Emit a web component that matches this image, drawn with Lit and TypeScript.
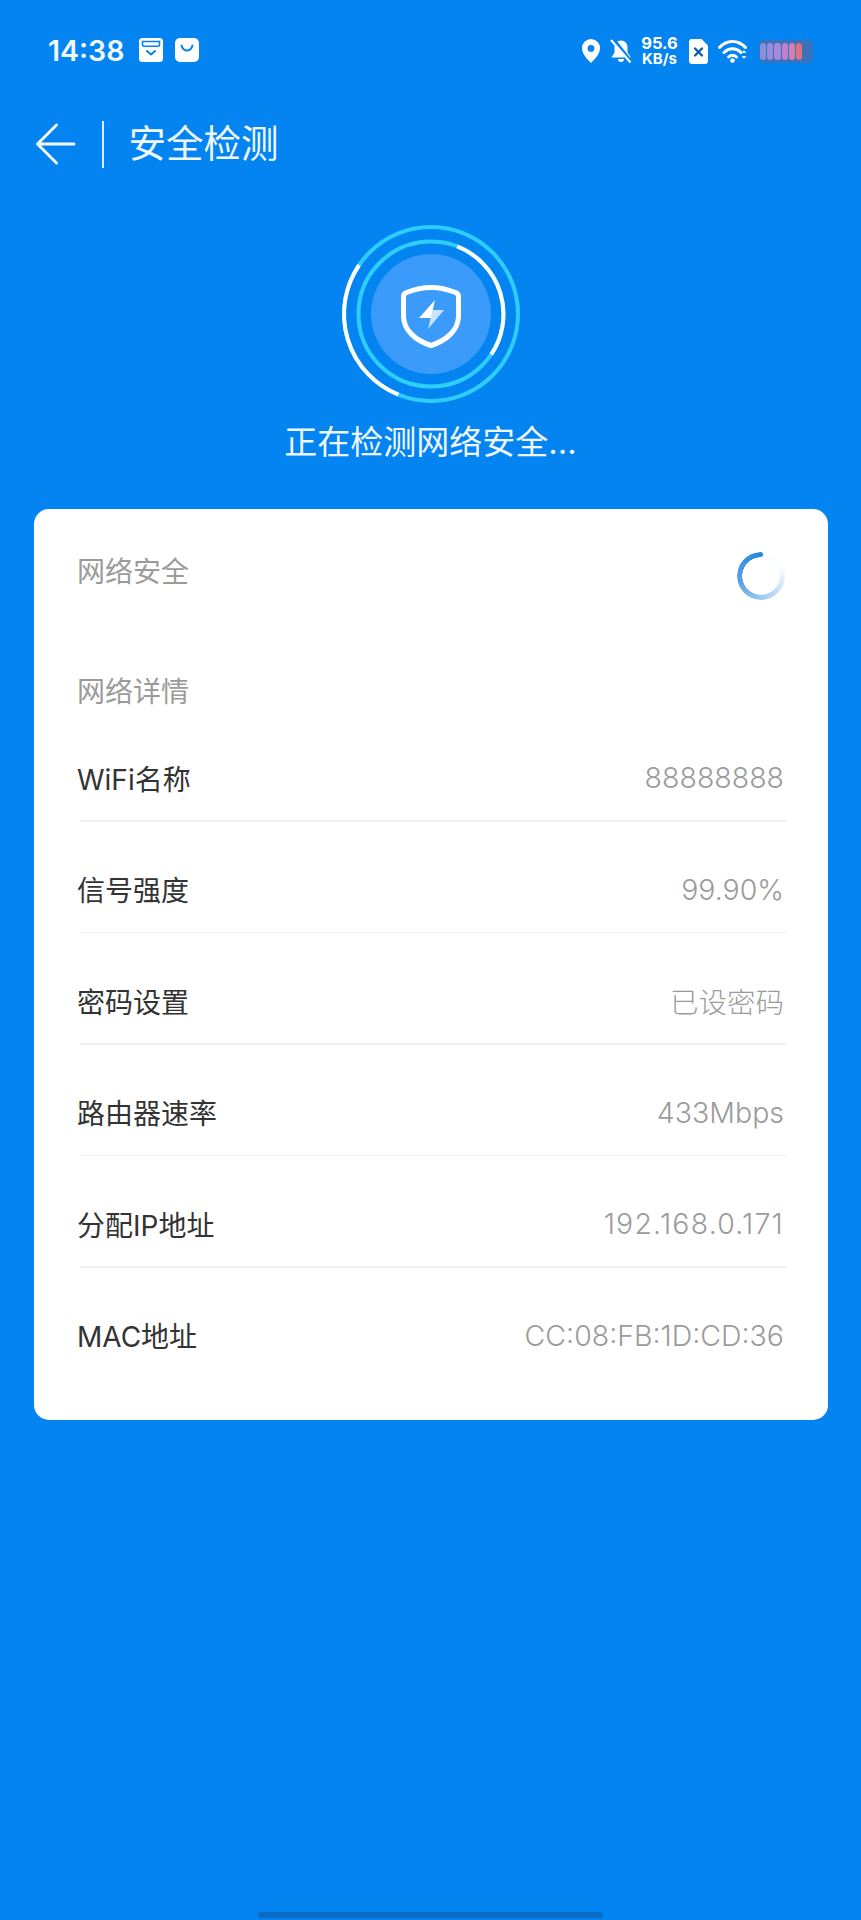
import { LitElement, html, css, svg } from "lit";
import { customElement } from "lit/decorators.js";

const rows: [string, string, number][] = [
  ["WiFi名称", "88888888", 0],
  ["信号强度", "99.90%", 0],
  ["密码设置", "已设密码", 0],
  ["路由器速率", "433Mbps", 0],
  ["分配IP地址", "192.168.0.171", 1.2],
  ["MAC地址", "CC:08:FB:1D:CD:36", 0],
];
const cells = ["#8a90dc", "#978cdc", "#a888da", "#bc83cc", "#d37fb0", "#e0717e"];

@customElement("app-root")
export class AppRoot extends LitElement {
  static styles = css`
    :host {
      display: flex;
      flex-direction: column;
      width: 861px;
      height: 1920px;
      background: #0384f1;
      font-family: "Inter", "Noto Sans CJK SC", sans-serif;
      overflow: hidden;
    }
    .status {
      height: 102px;
      flex: none;
      display: flex;
      align-items: flex-start;
      padding: 38px 48px 0 48px;
      box-sizing: border-box;
      color: #fff;
    }
    .time {
      font-size: 28.5px;
      font-weight: 600;
      line-height: 26px;
      width: 79px;
      flex: none;
      color: #f2f9ff;
    }
    .ic {
      display: block;
      flex: none;
    }
    .gap12 {
      margin-left: 12px;
    }
    .right {
      margin-left: auto;
      display: flex;
      align-items: center;
      height: 26px;
    }
    .bell {
      margin-left: 10px;
    }
    .wifi {
      margin-left: 10px;
    }
    .speed {
      width: 39px;
      margin: 0 10px 0 8px;
      text-align: center;
      font-size: 16.5px;
      line-height: 15px;
      font-weight: 700;
      white-space: nowrap;
    }
    .speed div:last-child {
      font-size: 15px;
    }
    .battery {
      margin-left: 12px;
      width: 54px;
      height: 23px;
      box-sizing: border-box;
      border-radius: 5px;
      background: #3a72bc;
      display: flex;
      gap: 1px;
      padding: 3px 11px 3px 1px;
      filter: blur(0.6px);
    }
    .cell {
      flex: 1;
      border-radius: 3px;
    }
    .nav {
      height: 48px;
      margin-top: 18px;
      flex: none;
      display: flex;
      align-items: center;
      padding-left: 35px;
      color: #f0f8ff;
    }
    .vline {
      width: 2px;
      height: 47px;
      background: #d8ecfd;
      margin: 0 24.5px 0 26px;
    }
    .title {
      font-size: 37.5px;
      font-weight: 400;
      line-height: 48px;
    }
    .hero {
      flex: none;
      margin-top: 51px;
      display: flex;
      flex-direction: column;
      align-items: center;
    }
    .detecting {
      margin-top: 11px;
      font-size: 33px;
      line-height: 44px;
      color: #eef7ff;
      font-weight: 400;
    }
    .card {
      margin: 45px 33.5px 0;
      height: 911px;
      box-sizing: border-box;
      flex: none;
      background: #fff;
      border-radius: 15px;
      padding: 42px 43.5px 0;
    }
    .sec {
      font-size: 28px;
      line-height: 42px;
      color: #9b9b9b;
      font-weight: 400;
    }
    .sec-top {
      display: flex;
      justify-content: space-between;
      align-items: flex-start;
      height: 120px;
    }
    .spin {
      position: relative;
      width: 48px;
      height: 48px;
      margin-top: 1px;
      margin-right: -1px;
    }
    .spin::after {
      content: "";
      position: absolute;
      left: 21px;
      top: 0;
      width: 5px;
      height: 5px;
      border-radius: 50%;
      background: #2a88de;
    }
    .spinner {
      width: 48px;
      height: 48px;
      border-radius: 50%;
      background: conic-gradient(
        from 0deg,
        rgba(42, 136, 222, 0) 0deg,
        rgba(42, 136, 222, 0.03) 70deg,
        rgba(42, 136, 222, 0.45) 180deg,
        rgba(42, 136, 222, 0.8) 260deg,
        #2a88de 360deg
      );
      -webkit-mask: radial-gradient(circle, transparent 18.5px, #000 19px);
      mask: radial-gradient(circle, transparent 18.5px, #000 19px);
    }
    .rows {
      display: flex;
      flex-direction: column;
    }
    .row {
      height: 111.5px;
      box-sizing: border-box;
      display: flex;
      flex-direction: column;
      justify-content: flex-end;
    }
    .row-first {
      height: 108.5px;
    }
    .line {
      display: flex;
      justify-content: space-between;
      align-items: center;
      height: 36px;
      margin-bottom: 24.5px;
      font-size: 28px;
    }
    .label {
      color: #333;
      font-weight: 400;
    }
    .value {
      color: #9b9b9b;
      font-weight: 300;
      font-size: 28.5px;
    }
    .divider {
      height: 1.5px;
      background: #f1f1f1;
      margin: 0 -3px 0 3px;
    }
    .spacer {
      height: 1.5px;
    }
    .home {
      margin: auto auto 2px;
      width: 345px;
      height: 6px;
      border-radius: 3px;
      background: #0a6cc4;
      flex: none;
    }
  `;

  private boxIcon() {
    return html`<svg class="ic gap12" width="24" height="24" viewBox="0 0 24 24">
      <rect width="24" height="24" rx="3.500" fill="#fff" />
      <path d="M3.500 3.500h17v3.200a1.500 1.500 0 0 1-1.500 1.500H5a1.500 1.500 0 0 1-1.500-1.500z" fill="none" stroke="#0384f1" stroke-width="1.600" />
      <path d="M8 13l4 3.500 4-3.500" fill="none" stroke="#0384f1" stroke-width="2" stroke-linecap="round" stroke-linejoin="round" />
    </svg>`;
  }

  private bagIcon() {
    return html`<svg class="ic gap12" width="24" height="24" viewBox="0 0 24 24">
      <rect width="24" height="24" rx="5" fill="#fff" />
      <path d="M6.500 7.500c1 3.600 3.200 5 5.500 5s4.500-1.400 5.500-5" fill="none" stroke="#0384f1" stroke-width="2" stroke-linecap="round" />
    </svg>`;
  }

  private rightIcons() {
    return html`
      <svg class="ic" width="18" height="24" viewBox="0 0 18 24">
        <path fill-rule="evenodd" fill="#fff" d="M9 0a9 9 0 0 1 9 9.200c0 5.600-5.500 11.200-9 14.800-3.500-3.600-9-9.200-9-14.800A9 9 0 0 1 9 0zm0 6a3.400 3.400 0 1 0 0 6.800A3.400 3.400 0 0 0 9 6z" />
      </svg>
      <svg class="ic bell" width="22" height="24" viewBox="0 0 22 24">
        <path fill="#fff" d="M11 1.500c4 0 6.500 3 6.500 7v5l3.500 5H1.500L4.500 13.500v-5c0-4 2.500-7 6.500-7z" />
        <path fill="#fff" d="M8 20h6a3 3 0 0 1-6 0z" />
        <path d="M2 -1l19 24" stroke="#0384f1" stroke-width="4" />
        <path d="M1 1l19.500 22.500" stroke="#fff" stroke-width="2.200" />
      </svg>
      <div class="speed"><div>95.6</div><div>KB/s</div></div>
      <svg class="ic" width="19" height="25" viewBox="0 0 19 25">
        <path fill="#fff" d="M3 0h9.500L19 6.500V22a3 3 0 0 1-3 3H3a3 3 0 0 1-3-3V3a3 3 0 0 1 3-3z" />
        <path d="M6 9.500l7 7m0-7l-7 7" stroke="#0a5fb0" stroke-width="2.400" stroke-linecap="round" />
      </svg>
      <svg class="ic wifi" width="29" height="24" viewBox="0 0 29 24">
        <path d="M1.500 8.500c7.500-8 18.500-8 26 0" fill="none" stroke="#fff" stroke-width="3" stroke-linecap="round" />
        <path d="M6 13.500c5-5 12-5 17 0" fill="none" stroke="#fff" stroke-width="3" stroke-linecap="round" />
        <path d="M10.500 18c2.500-2.300 5.500-2.300 8 0" fill="none" stroke="#fff" stroke-width="2.800" stroke-linecap="round" />
        <circle cx="14.500" cy="21.500" r="2.300" fill="#fff" />
        <path d="M23.500 14h5l-2.500-3zM23.500 17h5l-2.500 3z" fill="#fff" opacity="0.85" />
      </svg>
      <div class="battery">
        ${cells.map((c) => html`<div class="cell" style="background:${c}"></div>`)}
      </div>
    `;
  }

  private rings() {
    return html`<svg class="ic" width="190" height="190" viewBox="0 0 190 190">
      <circle cx="95" cy="95" r="60" fill="#3a9bfb" />
      <circle cx="95" cy="95" r="87" fill="none" stroke="#2dcdfd" stroke-width="4" />
      <circle cx="95" cy="95" r="72.500" fill="none" stroke="#2dcdfd" stroke-width="4" />
      <path d="M23.100 46.100A87 87 0 0 0 62.400 175.700" fill="none" stroke="#fff" stroke-width="4" />
      <path d="M121.200 27.500A72.500 72.500 0 0 1 155.200 135.400" fill="none" stroke="#fff" stroke-width="4" />
      ${svg`
        <path d="M95 68.500c8 0 17 2 24.500 5 1.600.7 3 2 3 3.500v20c0 14-12 24.500-27.500 29.500C79.500 121.500 67.500 111 67.500 97V77c0-1.500 1.400-2.800 3-3.500C78 70.500 87 68.500 95 68.500z" fill="none" stroke="#fff" stroke-width="5" stroke-linejoin="round" />
        <path d="M99 81L83 99h12z" fill="#fff" />
        <path d="M96.500 91H108L92 110l4.500-19z" fill="#fff" opacity="0.72" />
      `}
    </svg>`;
  }

  render() {
    return html`
      <div class="status">
        <div class="time">14:38</div>
        ${this.boxIcon()} ${this.bagIcon()}
        <div class="right">${this.rightIcons()}</div>
      </div>
      <div class="nav">
        <svg class="ic" width="41" height="42" viewBox="0 0 41 42">
          <path d="M39 21H3M21.500 2L2.500 21l19 19" fill="none" stroke="#f4faff" stroke-width="3" stroke-linecap="round" stroke-linejoin="round" />
        </svg>
        <div class="vline"></div>
        <div class="title">安全检测</div>
      </div>
      <div class="hero">
        ${this.rings()}
        <div class="detecting">正在检测网络安全...</div>
      </div>
      <div class="card">
        <div class="sec sec-top"><span>网络安全</span><div class="spin"><div class="spinner"></div></div></div>
        <div class="sec">网络详情</div>
        <div class="rows">
          ${rows.map(
            ([k, v, ls], i) => html`
              <div class="row ${i === 0 ? "row-first" : ""}">
                <div class="line"><span class="label">${k}</span><span class="value" style="letter-spacing:${ls}px">${v}</span></div>
                ${i < rows.length - 1 ? html`<div class="divider"></div>` : html`<div class="spacer"></div>`}
              </div>
            `
          )}
        </div>
      </div>
      <div class="home"></div>
    `;
  }
}
